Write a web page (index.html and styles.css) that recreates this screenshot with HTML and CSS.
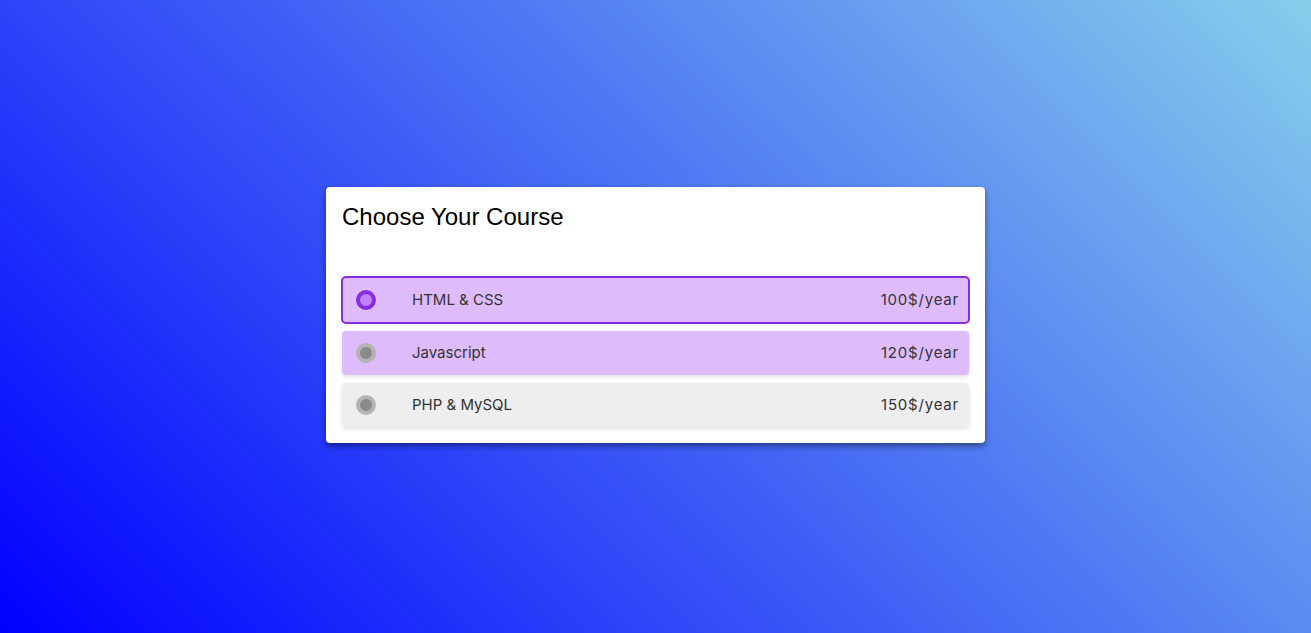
FILE: index.html
```html
<!DOCTYPE html>
<html lang="en">
<head>
<meta charset="utf-8">
<title>Choose Your Course</title>
<link rel="stylesheet" href="styles.css">
</head>
<body>
  <main class="card">
    <h2 class="title">Choose Your Course</h2>
    <div class="options">
      <label class="option option--selected">
        <span class="radio radio--on"></span>
        <span class="name">HTML &amp; CSS</span>
        <span class="price">100$/year</span>
      </label>
      <label class="option option--hover">
        <span class="radio"></span>
        <span class="name">Javascript</span>
        <span class="price">120$/year</span>
      </label>
      <label class="option">
        <span class="radio"></span>
        <span class="name">PHP &amp; MySQL</span>
        <span class="price">150$/year</span>
      </label>
    </div>
  </main>
</body>
</html>
```
FILE: styles.css
```css
* { box-sizing: border-box; }
html, body { height: 100%; }
body {
  margin: 0;
  display: flex;
  align-items: center;
  justify-content: center;
  background: linear-gradient(45deg, #0000ff, #87ceeb);
  font-family: "Liberation Sans", Arial, sans-serif;
}
.card {
  width: 659px;
  margin-bottom: 4px;
  background: #fff;
  border-radius: 4px;
  padding: 16px;
  box-shadow: 0 3px 6px rgba(0, 0, 0, 0.45);
}
.title {
  margin: 0 0 46px;
  font-size: 24px;
  font-weight: 400;
  line-height: 27px;
  color: #000;
}
.options {
  display: flex;
  flex-direction: column;
  gap: 8px;
}
.option {
  display: flex;
  align-items: center;
  height: 44px;
  padding: 0 10px 0 14px;
  background: #eeeeee;
  border-radius: 4px;
  box-shadow: 0 2px 4px rgba(0, 0, 0, 0.12);
  font-family: "Inter", "Noto Sans", sans-serif;
  font-size: 15px;
  color: #333;
}
.option--hover { background: #ddbbfd; }
.option--selected {
  background: #ddbbfd;
  border: 2px solid #8a2be2;
  height: 48px;
  margin: 0 -1px -1px;
  padding: 0 9px 0 13px;
  border-radius: 5px;
  box-shadow: none;
}
.radio {
  flex: none;
  width: 20px;
  height: 20px;
  border-radius: 50%;
  background: #8a8a8a;
  border: 4px solid #b3b3b3;
  margin-right: 36px;
}
.radio--on {
  background: #c084f5;
  border-color: #8a2be2;
}
.name { flex: 1; }
.price {
  text-align: right;
  letter-spacing: 0.8px;
}
```
